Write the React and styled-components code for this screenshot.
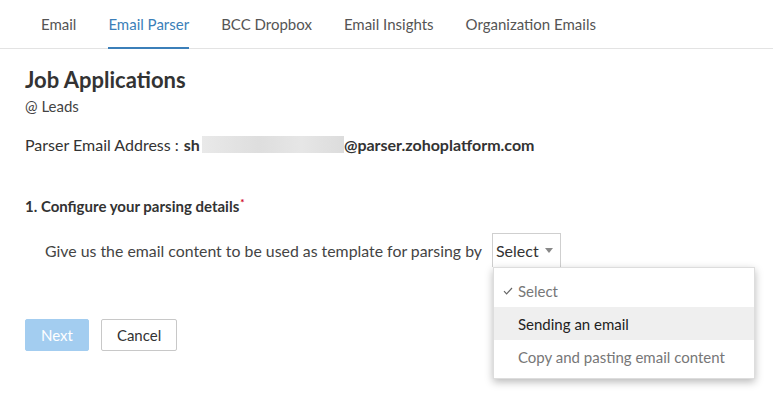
import React, { useState } from "react";
import styled, { createGlobalStyle } from "styled-components";

const GlobalStyle = createGlobalStyle`
  html, body {
    margin: 0;
    padding: 0;
    background: #fff;
    font-family: Lato, "Noto Sans", sans-serif;
    color: #333;
  }
`;

const Page = styled.div`
  width: 773px;
  height: 397px;
  overflow: hidden;
  background: #fff;
`;

const TabBar = styled.nav`
  display: flex;
  height: 48px;
  padding-left: 25px;
  border-bottom: 1px solid #e3e3e3;
`;

const Tab = styled.div`
  display: flex;
  align-items: center;
  margin: 0 16px;
  font-size: 15px;
  color: ${(p) => (p.$active ? "#3b7fb9" : "#555")};
  border-bottom: 2px solid ${(p) => (p.$active ? "#3b7fb9" : "transparent")};
  margin-bottom: -1px;
  cursor: pointer;
`;

const Body = styled.div`
  padding: 18px 25px 0;
`;

const Title = styled.h1`
  margin: 0;
  font-size: 22px;
  font-weight: 700;
  color: #333;
  line-height: 26px;
`;

const Module = styled.div`
  margin-top: 3px;
  font-size: 15px;
  line-height: 20px;
  color: #444;
`;

const AddressRow = styled.div`
  display: flex;
  align-items: center;
  height: 20px;
  margin-top: 18px;
  font-size: 16px;
  color: #333;
`;

const Strong = styled.span`
  font-weight: 700;
  margin-left: ${(p) => (p.$gap ? "5px" : "0")};
`;

const Blur = styled.span`
  display: inline-block;
  width: 142px;
  height: 17px;
  margin-left: 2px;
  background: linear-gradient(90deg, #e9e9e9, #dedede 40%, #e6e6e6 70%, #dcdcdc);
  filter: blur(0.6px);
`;

const Section = styled.div`
  height: 20px;
  margin-top: 42px;
  font-size: 15px;
  line-height: 20px;
  font-weight: 700;
  color: #333;
`;

const Req = styled.span`
  display: inline-block;
  vertical-align: top;
  line-height: 12px;
  color: #d0021b;
  font-size: 10px;
  margin-left: 1px;
`;

const ParseRow = styled.div`
  display: flex;
  align-items: center;
  height: 34px;
  margin-top: 17px;
  padding-left: 20px;
  font-size: 15.85px;
  color: #444;
`;

const SelectWrap = styled.div`
  position: relative;
  margin-left: 10px;
`;

const SelectBox = styled.div`
  display: flex;
  align-items: center;
  justify-content: space-between;
  width: 69px;
  height: 34px;
  box-sizing: border-box;
  padding: 0 7px 0 3px;
  border: 1px solid #cfcfcf;
  border-bottom: none;
  font-size: 16px;
  color: #333;
`;

const Caret = styled.span`
  width: 0;
  height: 0;
  border-left: 4px solid transparent;
  border-right: 4px solid transparent;
  border-top: 5px solid #888;
`;

const Menu = styled.ul`
  position: absolute;
  top: 34px;
  left: 1px;
  width: 262px;
  margin: 0;
  padding: 6px 0 5px;
  list-style: none;
  background: #fff;
  border: 1px solid #ddd;
  box-sizing: border-box;
  box-shadow: 0 3px 8px rgba(0, 0, 0, 0.28);
  z-index: 5;
`;

const Item = styled.li`
  display: flex;
  align-items: center;
  height: 33px;
  padding-left: 24px;
  position: relative;
  font-size: 15px;
  color: ${(p) => (p.$hover ? "#222" : "#777")};
  background: ${(p) => (p.$hover ? "#efefef" : "transparent")};
`;

const Check = styled.svg`
  position: absolute;
  left: 9px;
  top: 13px;
`;

const Actions = styled.div`
  display: flex;
  gap: 12px;
  margin-top: 52px;
`;

const Button = styled.button`
  height: 32px;
  box-sizing: border-box;
  padding: 0 15px;
  font-family: inherit;
  font-size: 15px;
  border-radius: 2px;
  border: 1px solid ${(p) => (p.$primary ? "#a3cdf0" : "#c8c8c8")};
  background: ${(p) => (p.$primary ? "#a3cdf0" : "#fff")};
  color: ${(p) => (p.$primary ? "#fff" : "#333")};
`;

const tabs = ["Email", "Email Parser", "BCC Dropbox", "Email Insights", "Organization Emails"];
const options = ["Select", "Sending an email", "Copy and pasting email content"];

export default function App() {
  const [active] = useState("Email Parser");
  return (
    <Page>
      <GlobalStyle />
      <TabBar>
        {tabs.map((t) => (
          <Tab key={t} $active={t === active}>
            {t}
          </Tab>
        ))}
      </TabBar>
      <Body>
        <Title>Job Applications</Title>
        <Module>@ Leads</Module>
        <AddressRow>
          Parser Email Address :<Strong $gap>sh</Strong>
          <Blur />
          <Strong>@parser.zohoplatform.com</Strong>
        </AddressRow>
        <Section>
          1. Configure your parsing details<Req>*</Req>
        </Section>
        <ParseRow>
          Give us the email content to be used as template for parsing by
          <SelectWrap>
            <SelectBox>
              Select <Caret />
            </SelectBox>
            <Menu>
              {options.map((o, i) => (
                <Item key={o} $hover={i === 1}>
                  {i === 0 && (
                    <Check width="10" height="8" viewBox="0 0 10 8">
                      <path d="M1 4.2 L3.6 6.8 L9 1" fill="none" stroke="#666" strokeWidth="1.2" />
                    </Check>
                  )}
                  {o}
                </Item>
              ))}
            </Menu>
          </SelectWrap>
        </ParseRow>
        <Actions>
          <Button $primary>Next</Button>
          <Button>Cancel</Button>
        </Actions>
      </Body>
    </Page>
  );
}
